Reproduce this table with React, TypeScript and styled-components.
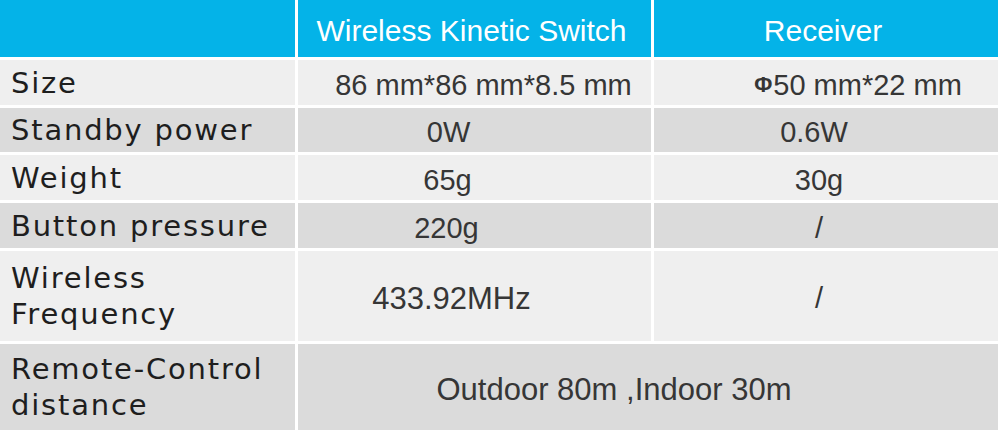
import * as React from "react";
import styled, { createGlobalStyle } from "styled-components";

type Tone = "light" | "dark";

type SpecRow = {
  label: string[];
  tone: Tone;
  switchValue: React.ReactNode;
  receiverValue?: React.ReactNode;
  switchShift: number;
  receiverShift: number;
};

const Phi = styled.span`
  font-size: 22px;
  font-weight: 700;
  margin-right: 1px;
`;

const ROWS: SpecRow[] = [
  {
    label: ["Size"],
    tone: "light",
    switchValue: "86 mm*86 mm*8.5 mm",
    receiverValue: (
      <>
        <Phi>Φ</Phi>50 mm*22 mm
      </>
    ),
    switchShift: 9,
    receiverShift: 32,
  },
  {
    label: ["Standby power"],
    tone: "dark",
    switchValue: "0W",
    receiverValue: "0.6W",
    switchShift: -26,
    receiverShift: -12,
  },
  {
    label: ["Weight"],
    tone: "light",
    switchValue: "65g",
    receiverValue: "30g",
    switchShift: -27,
    receiverShift: -7,
  },
  {
    label: ["Button pressure"],
    tone: "dark",
    switchValue: "220g",
    receiverValue: "/",
    switchShift: -28,
    receiverShift: -7,
  },
  {
    label: ["Wireless", "Frequency"],
    tone: "light",
    switchValue: "433.92MHz",
    receiverValue: "/",
    switchShift: -23,
    receiverShift: -7,
  },
  {
    label: ["Remote-Control", "distance"],
    tone: "dark",
    switchValue: "Outdoor 80m ,Indoor 30m",
    switchShift: -34,
    receiverShift: 0,
  },
];

const App: React.FC = () => {
  return (
    <>
      <GlobalStyle />
      <Table>
        <HeaderCell />
        <HeaderCell>Wireless Kinetic Switch</HeaderCell>
        <HeaderCell>Receiver</HeaderCell>
        {ROWS.map((row) => {
          const merged = row.receiverValue === undefined;
          return (
            <React.Fragment key={row.label.join(" ")}>
              <LabelCell $tone={row.tone}>
                {row.label.map((line) => (
                  <span key={line}>{line}</span>
                ))}
              </LabelCell>
              <ValueCell
                $tone={row.tone}
                $shift={row.switchShift}
                $span={merged ? 2 : 1}
                $big={merged || row.label.length > 1}
              >
                {row.switchValue}
              </ValueCell>
              {!merged && (
                <ValueCell
                  $tone={row.tone}
                  $shift={row.receiverShift}
                  $span={1}
                  $big={false}
                >
                  {row.receiverValue}
                </ValueCell>
              )}
            </React.Fragment>
          );
        })}
      </Table>
    </>
  );
};

export default App;

const GlobalStyle = createGlobalStyle`
  html, body {
    margin: 0;
    padding: 0;
    background: #ffffff;
  }
`;

const Table = styled.div`
  display: grid;
  grid-template-columns: 295px 353px 344px;
  grid-template-rows: 57px 45px 44px 45px 45px 90px 86px;
  gap: 3px;
  width: 998px;
  background: #ffffff;
`;

const HeaderCell = styled.div`
  background: #04b3e8;
  color: #ffffff;
  font-family: "Liberation Sans", Arial, sans-serif;
  font-size: 30px;
  display: flex;
  align-items: center;
  justify-content: center;
  padding-top: 4px;
  padding-right: 6px;
  box-sizing: border-box;
`;

const toneColor = (tone: Tone) => (tone === "light" ? "#efefef" : "#dbdbdb");

const LabelCell = styled.div<{ $tone: Tone }>`
  background: ${(p) => toneColor(p.$tone)};
  color: #1e1e1e;
  font-family: "DejaVu Sans", Verdana, sans-serif;
  font-size: 29px;
  letter-spacing: 1.8px;
  line-height: 36px;
  padding-left: 11px;
  display: flex;
  flex-direction: column;
  justify-content: center;
`;

const ValueCell = styled.div<{
  $tone: Tone;
  $shift: number;
  $span: number;
  $big: boolean;
}>`
  background: ${(p) => toneColor(p.$tone)};
  grid-column: span ${(p) => p.$span};
  color: #363636;
  font-family: "Liberation Sans", Arial, sans-serif;
  font-size: ${(p) => (p.$big ? 31 : 29)}px;
  display: flex;
  align-items: center;
  justify-content: center;
  white-space: nowrap;
  padding-top: 5px;
  padding-left: ${(p) => Math.max(p.$shift, 0) * 2}px;
  padding-right: ${(p) => Math.max(-p.$shift, 0) * 2}px;
  box-sizing: border-box;
`;
